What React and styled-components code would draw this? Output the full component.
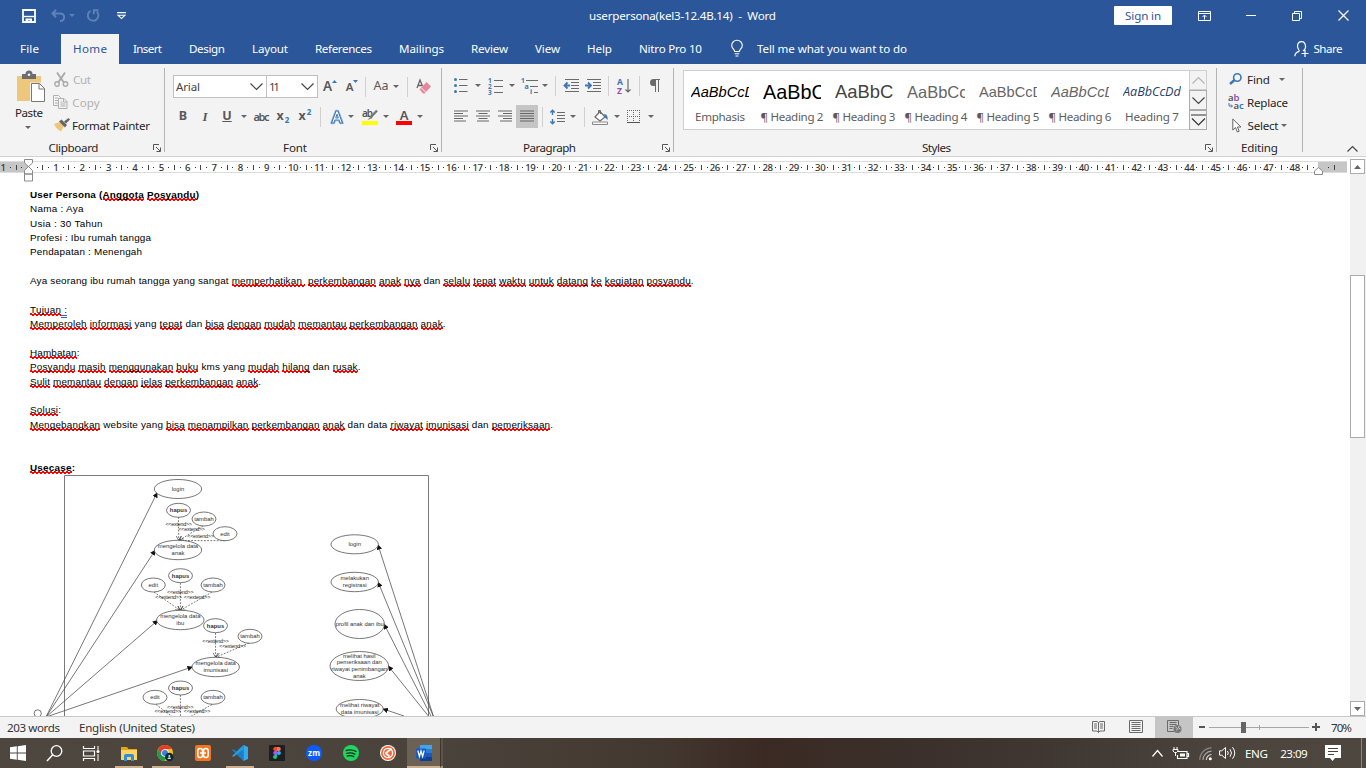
import React, { useLayoutEffect, useRef, useState } from "react";
import styled, { createGlobalStyle, css } from "styled-components";

const UI = `"Noto Sans", "Open Sans", sans-serif`;
const ARIAL = `"Liberation Sans", Arial, sans-serif`;
const BLUE = "#2b579a";

const Global = createGlobalStyle`
  * { box-sizing: border-box; }
  html, body { margin: 0; padding: 0; overflow: hidden; background: #fff; }
  body { font-family: ${UI}; font-size: 11.6px; color: #262626; }
  svg { display: block; flex: none; overflow: visible; }
`;

/* ---------- text fitted to a given advance width ---------- */
const FitBox = styled.span`
  display: inline-block;
  flex: none;
  white-space: pre;
  width: ${(p) => p.$w}px;
`;

function Fit({ w, children, className }) {
  const ref = useRef(null);
  const [ls, setLs] = useState(0);
  useLayoutEffect(() => {
    const el = ref.current;
    const n = el.textContent.length;
    const natural = el.getBoundingClientRect().width;
    if (n > 1) setLs((w - natural) / (n - 1));
  }, [w]);
  return (
    <FitBox $w={w} className={className}>
      <span ref={ref} style={{ letterSpacing: ls }}>{children}</span>
    </FitBox>
  );
}

/* ---------- frame ---------- */
const Window = styled.div`
  width: 1366px;
  height: 768px;
  display: flex;
  flex-direction: column;
  overflow: hidden;
  background: #fff;
`;

const Slot = styled.div`
  flex: none;
  display: flex;
  align-items: center;
  justify-content: ${(p) => p.$align || "center"};
  width: ${(p) => p.$w}px;
  margin-left: ${(p) => p.$ml || 0}px;
`;

/* ---------- title bar ---------- */
const TitleBar = styled.header`
  height: 32px;
  flex: none;
  display: flex;
  align-items: center;
  padding-bottom: 1px;
  background: ${BLUE};
  color: #fff;
`;
const SignIn = styled.button`
  width: 58px;
  height: 19px;
  margin: 0 0 0 338px;
  padding: 0;
  border: 0;
  border-radius: 1px;
  background: #fff;
  color: ${BLUE};
  font: 11.6px/18px ${UI};
`;

/* ---------- tabs ---------- */
const TabBar = styled.nav`
  height: 32px;
  flex: none;
  display: flex;
  align-items: flex-end;
  background: ${BLUE};
  color: #fff;
`;
const Tab = styled.div`
  flex: none;
  height: 30px;
  display: flex;
  align-items: center;
  padding: 0 0 1px ${(p) => p.$pl}px;
  width: ${(p) => p.$w}px;
  ${(p) => p.$active && css`background: #f3f3f3; color: ${BLUE};`}
`;

/* ---------- ribbon ---------- */
const Ribbon = styled.section`
  height: 93px;
  flex: none;
  display: flex;
  background: #f3f3f3;
  border-bottom: 1px solid #d2d2d2;
`;
const Group = styled.div`
  flex: none;
  width: ${(p) => p.$w}px;
  height: 84px;
  margin-top: 4px;
  border-right: 1px solid #b4b4b4;
  display: flex;
  flex-direction: column;
`;
const GroupBody = styled.div`
  height: 72px;
  flex: none;
  display: flex;
  flex-direction: ${(p) => (p.$row ? "row" : "column")};
`;
const GroupFoot = styled.div`
  height: 16px;
  flex: none;
  display: flex;
  align-items: center;
  padding-bottom: 1px;
  padding-left: ${(p) => p.$pl}px;
`;
const Launcher = styled.span`
  margin-left: auto;
  padding: 1px 3px 0 0;
`;
const ToolRow = styled.div`
  flex: none;
  display: flex;
  align-items: center;
  height: ${(p) => p.$h}px;
  margin-top: ${(p) => p.$mt || 0}px;
`;
const Sep = styled.i`
  flex: none;
  width: 1px;
  height: 20px;
  background: #d0d0d0;
  margin-left: ${(p) => p.$ml || 0}px;
`;
const PasteColumn = styled.div`
  width: 52px;
  padding: 3px 0 0 15px;
  flex: none;
`;
const PasteCaption = styled.div`
  height: 21px;
  line-height: 16px;
  margin-top: 2px;
`;
const ClipColumn = styled.div`
  flex: none;
  display: flex;
  flex-direction: column;
`;
const ClipItem = styled.div`
  height: 23px;
  display: flex;
  align-items: center;
  padding-bottom: 1px;
  color: ${(p) => (p.$off ? "#b1b1b1" : "#262626")};
`;
const Combo = styled.div`
  flex: none;
  width: ${(p) => p.$w}px;
  height: 23px;
  border: 1px solid #c0c0c0;
  background: #fff;
  display: flex;
  align-items: center;
  justify-content: space-between;
  padding: 0 3px 0 2px;
  color: #444;
  & + & { margin-left: -1px; }
`;
const Glyph = styled.span`
  color: ${(p) => p.$c || "#595959"};
  font-family: ${(p) => p.$f || UI};
  font-size: ${(p) => p.$s || 12}px;
  font-weight: ${(p) => p.$b || 400};
  font-style: ${(p) => (p.$i ? "italic" : "normal")};
  text-decoration: ${(p) => p.$d || "none"};
  line-height: 1;
  white-space: nowrap;
`;
const Script = styled.span`
  font-size: 8px;
  color: #3b78b5;
  position: relative;
  top: ${(p) => p.$top}px;
  margin-left: 1px;
`;
const Pressed = styled.div`
  flex: none;
  width: 22px;
  height: 23px;
  background: #c5c5c5;
  margin-left: 4px;
  display: flex;
  align-items: center;
  justify-content: center;
`;

/* ---------- style gallery ---------- */
const Gallery = styled.div`
  width: 524px;
  height: 60px;
  margin: 2px 0 0 9px;
  border: 1px solid #cfcfcf;
  background: #fff;
  display: flex;
`;
const StyleItem = styled.div`
  width: 72px;
  flex: none;
  display: flex;
  flex-direction: column;
  align-items: center;
`;
const Preview = styled.div`
  width: 58px;
  height: 34px;
  margin-top: 4px;
  overflow: hidden;
  white-space: nowrap;
  line-height: 34px;
  font-family: ${(p) => p.$f || ARIAL};
  font-size: ${(p) => p.$s}px;
  font-style: ${(p) => (p.$i ? "italic" : "normal")};
  color: ${(p) => p.$c};
`;
const StyleName = styled.div`
  height: 16px;
  line-height: 15px;
  color: #5c5c5c;
`;
const GalleryScroll = styled.div`
  margin: -1px -1px -1px auto;
  width: 18px;
  display: flex;
  flex-direction: column;
`;
const ScrollKey = styled.div`
  flex: 1;
  border: 1px solid ${(p) => (p.$off ? "#d0d0d0" : "#ababab")};
  background: #f3f3f3;
  display: flex;
  align-items: center;
  justify-content: center;
`;

/* ---------- ruler ---------- */
const RulerBar = styled.div`
  height: 17px;
  flex: none;
  display: flex;
  padding-top: 4px;
  position: relative;
`;
const RulerTrack = styled.div`
  width: 1347px;
  height: 12px;
  display: flex;
  overflow: hidden;
  border-top: 1px solid #dcdcdc;
  border-bottom: 1px solid #dcdcdc;
  background: linear-gradient(90deg, #c6c6c6 0 29px, #fff 29px 1318px, #c6c6c6 1318px);
  > :first-child { margin-left: -10.6px; }
`;
const RulerCell = styled.div`
  flex: none;
  width: 26.37px;
  height: 11px;
  display: flex;
  align-items: center;
  justify-content: space-between;
  font-size: 9.6px;
  font-weight: 500;
  line-height: 11px;
  color: #333;
`;
const Tick = styled.i`
  width: 1px;
  height: 5px;
  background: #444;
`;
const Dot = styled.i`
  width: 1px;
  height: 1px;
  background: #333;
`;
const Num = styled.span`
  width: 11px;
  margin: 0 -3px;
  text-align: center;
  white-space: nowrap;
  letter-spacing: -0.4px;
`;
const Marker = styled.div`
  position: absolute;
  left: ${(p) => p.$x}px;
  top: ${(p) => p.$y}px;
  z-index: 2;
`;

/* ---------- document ---------- */
const Workspace = styled.main`
  height: 542px;
  flex: none;
  display: flex;
`;
const Page = styled.article`
  flex: 1;
  padding: 14px 0 0 30px;
  overflow: hidden;
  background: #fff;
  font-family: ${ARIAL};
  font-size: 9.9px;
  color: #000;
`;
const Line = styled.div`
  height: 14.36px;
  line-height: 14.36px;
  white-space: pre;
  font-weight: ${(p) => (p.$b ? 700 : 400)};
`;
const Misspelt = styled.span`
  background:
    linear-gradient(45deg, transparent 36%, #f00 36% 64%, transparent 64%) 0 100% / 4px 3px repeat-x,
    linear-gradient(-45deg, transparent 36%, #f00 36% 64%, transparent 64%) 2px 100% / 4px 3px repeat-x;
  padding-bottom: 1px;
`;
const Grammar = styled.span`
  border-bottom: 3px double #2a62d8;
`;
const Diagram = styled.svg`
  margin: -1px 0 0 -2px;
  display: block;
`;
const ScrollBar = styled.aside`
  width: 16px;
  margin-top: -15px;
  z-index: 1;
  display: flex;
  flex-direction: column;
  background: #f1f1f1;
`;
const ScrollArrow = styled.div`
  width: 15px;
  height: 15px;
  flex: none;
  border: 1px solid #ababab;
  background: #fff;
  display: flex;
  align-items: center;
  justify-content: center;
`;
const Thumb = styled.div`
  width: 15px;
  height: 163px;
  margin: 101px 0 auto;
  border: 1px solid #ababab;
  background: #fff;
`;

/* ---------- status bar ---------- */
const StatusBar = styled.footer`
  height: 22px;
  flex: none;
  display: flex;
  align-items: center;
  background: #f3f3f3;
  border-top: 1px solid #c8c8c8;
  color: #333;
`;
const StatusText = styled.div`
  flex: none;
  margin-left: ${(p) => p.$ml}px;
  padding-bottom: 1px;
`;
const ViewButton = styled.div`
  width: 38px;
  height: 21px;
  flex: none;
  display: flex;
  align-items: center;
  justify-content: center;
  padding-bottom: 2px;
  background: ${(p) => (p.$on ? "#c5c5c5" : "transparent")};
`;

/* ---------- task bar ---------- */
const TaskBar = styled.div`
  height: 30px;
  flex: none;
  display: flex;
  background: linear-gradient(90deg, #4e473f 0, #4a433c 32%, #43382f 48%, #3a2a23 56%, #3b302c 68%, #423a35 80%, #4c453e 90%, #4e4740 100%);
  color: #fff;
`;
const AppSlot = styled.div`
  flex: none;
  width: ${(p) => p.$w || 37}px;
  height: 30px;
  display: flex;
  align-items: center;
  justify-content: center;
`;
const RunningApp = styled.div`
  height: 30px;
  width: ${(p) => (p.$on ? 33 : 28)}px;
  display: flex;
  align-items: center;
  justify-content: center;
  padding-top: 2px;
  border-bottom: 2px solid #cbb091;
  background: ${(p) => (p.$on ? "#6b6154" : "transparent")};
`;
const Stacked = styled.div`
  width: 3px;
  height: 30px;
  border-left: 1px solid #3c362f;
  border-bottom: 2px solid #a8937a;
  background: #5d5449;
`;
const Tray = styled.div`
  margin-left: auto;
  display: flex;
  align-items: center;
`;
const DesktopEdge = styled.i`
  width: 1px;
  height: 30px;
  background: #8b857e;
  margin: 0 4px 0 20px;
`;

/* ---------- small drawings ---------- */
const G = "#6a6a6a";
const B = "#3b78b5";

const Caret = ({ c = "#666" }) => (
  <svg width="6" height="3"><path d="M0 0h6L3 3z" fill={c} /></svg>
);
const Svg = ({ w, h, children, ...r }) => (
  <svg width={w} height={h} viewBox={`0 0 ${w} ${h}`} fill="none" {...r}>{children}</svg>
);
const Chevron = ({ w = 13, h = 7, c = "#444", up }) => (
  <Svg w={w} h={h}>
    <path d={up ? `M.5 ${h - 0.5}L${w / 2} .5L${w - 0.5} ${h - 0.5}` : `M.5 .5L${w / 2} ${h - 0.5}L${w - 0.5} .5`} stroke={c} strokeWidth="1.2" />
  </Svg>
);
const LauncherIcon = () => (
  <Svg w={8} h={8}><path d="M.5 6V.5H6M3 3l4 4M7.5 3.5v4h-4" stroke="#555" /></Svg>
);
const AlignIcon = ({ xs }) => (
  <Svg w={14} h={13}>
    {xs.map(([a, b], i) => <path key={i} d={`M${a} ${i * 2 + i * 0.5 + 1}H${b}`} stroke="#666" />)}
  </Svg>
);

const RIBBON_TABS = [
  ["File", 61, 20, 19], ["Home", 58, 12, 34, true], ["Insert", 56, 14, 29], ["Design", 63, 14, 36],
  ["Layout", 63, 14, 36], ["References", 84, 14, 57], ["Mailings", 72, 14, 45], ["Review", 64, 14, 37],
  ["View", 52, 14, 25], ["Help", 52, 14, 25], ["Nitro Pro 10", 106, 14, 63],
];

const STYLES = [
  ["Emphasis", 50, { $s: 14.6, $i: true, $c: "#000" }],
  ["¶ Heading 2", 63, { $s: 19.8, $c: "#000" }],
  ["¶ Heading 3", 63, { $s: 18.4, $c: "#434343" }],
  ["¶ Heading 4", 63, { $s: 16.5, $c: "#666" }],
  ["¶ Heading 5", 63, { $s: 14.6, $c: "#666" }],
  ["¶ Heading 6", 63, { $s: 14.6, $i: true, $c: "#666" }],
  ["Heading 7", 54, { $s: 12.6, $i: true, $c: "#1f4068", $f: `"Open Sans", sans-serif` }],
];

const LINES = [
  ["User Persona (*Anggota* *Posyandu*)", 169, true],
  ["Nama : Aya", 53.5],
  ["Usia : 30 Tahun", 72.5],
  ["Profesi : Ibu rumah tangga", 121],
  ["Pendapatan : Menengah", 112],
  null,
  ["Aya seorang ibu rumah tangga yang sangat *memperhatikan * *perkembangan* *anak* *nya* dan *selalu* *tepat* *waktu* *untuk* *datang* *ke* *kegiatan* *posyandu*.", 663.5],
  null,
  ["*Tujuan*_ :_", 37],
  ["*Memperoleh* *informasi* yang *tepat* dan *bisa* *dengan* *mudah* *memantau* *perkembangan* *anak*.", 415.5],
  null,
  ["*Hambatan*:", 49.5],
  ["*Posyandu* *masih* *menggunakan* *buku* kms yang *mudah* *hilang* dan *rusak*.", 330.5],
  ["*Sulit* *memantau* *dengan* *jelas* *perkembangan* *anak*.", 231],
  null,
  ["*Solusi*:", 31],
  ["*Mengebangkan* website yang *bisa* *menampilkan* *perkembangan* *anak* dan data *riwayat* *imunisasi* dan *pemeriksaan*.", 523],
  null,
  null,
  ["*Usecase*:", 45, true],
];

function rich(text) {
  return text.split(/(\*[^*]+\*|_[^_]+_)/).filter(Boolean).map((part, i) => {
    if (part[0] === "*") return <Misspelt key={i}>{part.slice(1, -1)}</Misspelt>;
    if (part[0] === "_") return <Grammar key={i}>{part.slice(1, -1)}</Grammar>;
    return part;
  });
}

const NODES = [
  [178, 489, 23.7, 9.5, ["login"]],
  [178.5, 510.3, 12, 7, ["hapus"], true],
  [204, 519, 12, 7, ["tambah"]],
  [225, 533.7, 12, 7, ["edit"]],
  [178, 550, 23.7, 9.7, ["mengelola data", "anak"]],
  [180.5, 575.7, 12, 7, ["hapus"], true],
  [153.3, 585, 12, 7, ["edit"]],
  [213, 585, 12, 7, ["tambah"]],
  [180.3, 620, 23.7, 9.7, ["mengelola data", "ibu"]],
  [215.5, 625.7, 12, 7, ["hapus"], true],
  [250, 636.3, 12, 7, ["tambah"]],
  [215.7, 667, 23.7, 9.7, ["mengelola data", "imunisasi"]],
  [180.5, 688, 12, 7, ["hapus"], true],
  [155, 697.3, 12, 7, ["edit"]],
  [213, 697.3, 12, 7, ["tambah"]],
  [354.7, 544.3, 23.7, 9.5, ["login"]],
  [354.7, 582, 23.7, 9.7, ["melakukan", "registrasi"]],
  [359.7, 624, 24.7, 14.5, ["profil anak dan ibu"]],
  [359.3, 666, 29.3, 14.5, ["melihat hasil", "pemeriksaan dan", "riwayat penimbangan", "anak"]],
  [359.7, 709, 23.5, 9.5, ["melihat riwayat", "data imunisasi"]],
];
const ARROWS = [
  [46, 717, 157, 493], [46, 717, 155, 550.5], [46, 717, 157.5, 620.5], [46, 717, 192, 667],
  [434, 718, 378, 545], [434, 718, 378.3, 582.5], [432, 718, 384.3, 624.5], [430, 718, 388.5, 666.3], [404, 716, 383.3, 709],
];
const DASHES = [
  [178.5, 517, 178.7, 540], [203, 526, 179.5, 540], [225, 540.7, 179.5, 540.5],
  [180.4, 583, 180.4, 610], [154, 592, 179.5, 610], [212, 592, 181, 610],
  [215.5, 633, 215.6, 657], [249, 643, 216.5, 657],
  [180.4, 695, 180.4, 722], [156, 704.5, 179.5, 722], [212, 704.5, 181, 722],
];
const EXTENDS = [
  [178.7, 524.8], [191.7, 529.3], [200.5, 536.7], [180.3, 592.8], [168.5, 597.8], [197, 597.5],
  [215.5, 641.3], [232.5, 646.3], [180.3, 707.3], [167.7, 711.8], [197, 711.8],
];

function UseCases() {
  return (
    <Diagram width="412" height="244" viewBox="28 474 412 244" fill="none" stroke="#4a4a4a" strokeWidth="0.75">
      <defs>
        <marker id="head" viewBox="0 0 6 6" refX="5" refY="3" markerWidth="5.5" markerHeight="5.5" orient="auto" markerUnits="userSpaceOnUse">
          <path d="M0 0L6 3L0 6z" fill="#111" stroke="none" />
        </marker>
        <marker id="open" viewBox="0 0 6 6" refX="5" refY="3" markerWidth="5" markerHeight="5" orient="auto" markerUnits="userSpaceOnUse">
          <path d="M0 0L5.5 3L0 6" stroke="#333" />
        </marker>
      </defs>
      <path d="M64.5 720V475.5H428.5V720" stroke="#7a7a7a" strokeWidth="1" />
      {ARROWS.map(([a, b, c, d], i) => <line key={i} x1={a} y1={b} x2={c} y2={d} markerEnd="url(#head)" />)}
      {DASHES.map(([a, b, c, d], i) => <line key={i} x1={a} y1={b} x2={c} y2={d} strokeDasharray="1.8 1.4" markerEnd="url(#open)" />)}
      {NODES.map(([x, y, rx, ry], i) => <ellipse key={i} cx={x} cy={y} rx={rx} ry={ry} fill="#fff" />)}
      <g fill="#333" stroke="none" fontFamily="Liberation Sans, Arial, sans-serif" textAnchor="middle">
        {NODES.map(([x, y, , , lines, bold], i) =>
          lines.map((t, j) => (
            <text key={`${i}-${j}`} x={x} y={y + 1.8 + (j - (lines.length - 1) / 2) * 6.8} fontSize="5.9" fontWeight={bold ? 700 : 400}>{t}</text>
          ))
        )}
        {EXTENDS.map(([x, y], i) => (
          <text key={i} x={x} y={y + 1.5} fontSize="5.3" textLength="26.500" fill="#222">{"<<extend>>"}</text>
        ))}
      </g>
      <circle cx="37.7" cy="713.4" r="3.6" />
    </Diagram>
  );
}

function Title() {
  return (
    <TitleBar>
      <Slot $w={14} $ml={22}>
        <Svg w={14} h={14}>
          <path d="M1 1h12v12H1z" stroke="#fff" strokeWidth="1.8" /><path d="M2 7.5h10" stroke="#fff" strokeWidth="1.4" />
          <path d="M3.5 9.5h6.5V14h-2v-2.5H6V14H3.5z" fill="#fff" />
        </Svg>
      </Slot>
      <Slot $w={15} $ml={15}>
        <Svg w={15} h={13}><path d="M5 .8L1.5 4.5L5 8.2M1.8 4.5H9c5.5 0 5.5 7.5 0 7.5" stroke="#5f82b6" strokeWidth="2" /></Svg>
      </Slot>
      <Slot $w={6} $ml={3}><Caret c="#5f82b6" /></Slot>
      <Slot $w={14} $ml={11}>
        <Svg w={14} h={13}><path d="M4.500 1.800A5.300 5.300 0 1 0 10.800 2.600M7.800 5.200V1.200H12.500" stroke="#5f82b6" strokeWidth="1.900" /></Svg>
      </Slot>
      <Slot $w={9} $ml={17}>
        <Svg w={9} h={8}><path d="M0 .6h9M1 3.200h7L4.500 6.600z" stroke="#fff" strokeWidth="1.100" /></Svg>
      </Slot>
      <Slot $w={187} $ml={463}><Fit w={187}>userpersona(kel3-12.4B.14)  -  Word</Fit></Slot>
      <SignIn><Fit w={36}>Sign in</Fit></SignIn>
      <Slot $w={13} $ml={26}>
        <Svg w={13} h={10}><path d="M.5 .5h12v9H.5zM.5 2.500h12M6.500 8.500v-4M4.500 6l2-2 2 2" stroke="#fff" /></Svg>
      </Slot>
      <Slot $w={10} $ml={35}><Svg w={10} h={1}><path d="M0 .5h10" stroke="#fff" /></Svg></Slot>
      <Slot $w={10} $ml={36}><Svg w={10} h={10}><path d="M.5 2.500h7v7h-7zM2.500 2.500v-2h7v7h-2" stroke="#fff" /></Svg></Slot>
      <Slot $w={11} $ml={36}><Svg w={11} h={11}><path d="M.5 .5l10 10M10.500 .5l-10 10" stroke="#fff" strokeWidth="1.200" /></Svg></Slot>
    </TitleBar>
  );
}

function Tabs() {
  return (
    <TabBar>
      {RIBBON_TABS.map(([t, w, pl, tw, on]) => (
        <Tab key={t} $w={w} $pl={pl} $active={on}><Fit w={tw}>{t}</Fit></Tab>
      ))}
      <Tab $w={26} $pl={0}>
        <Svg w={12} h={17}>
          <path d="M3.700 11.500c0-2-3-3-3-6a5.300 5.300 0 0 1 10.600 0c0 3-3 4-3 6zM3.700 13.800h4.600M4.500 16h3" stroke="#fff" strokeWidth="1.100" />
        </Svg>
      </Tab>
      <Tab $w={537} $pl={0}><Fit w={150}>Tell me what you want to do</Fit></Tab>
      <Tab $w={72} $pl={0}>
        <Svg w={15} h={16}>
          <path d="M3.500 5.500a4 4.800 0 1 1 5.500 4.400M3.500 5.500C3.800 8.500 6 9.500 5 10.300C2.500 11 1 12.500 .8 15.200M11 9v7M7.500 12.500h7" stroke="#fff" strokeWidth="1.200" />
        </Svg>
        <Slot $w={30} $ml={4}><Fit w={29}>Share</Fit></Slot>
      </Tab>
    </TabBar>
  );
}

const Foot = ({ pl, w, children, launcher = true }) => (
  <GroupFoot $pl={pl}>
    <Fit w={w}>{children}</Fit>
    {launcher && <Launcher><LauncherIcon /></Launcher>}
  </GroupFoot>
);

function ClipboardGroup() {
  return (
    <Group $w={165}>
      <GroupBody $row>
        <PasteColumn>
          <Svg w={30} h={32}>
            <path d="M2 5h24v25H2z" fill="#edc77c" /><path d="M7 3h3.500a3.500 3.500 0 0 1 7 0H21v5H7z" fill="#6d6d6d" /><circle cx="14" cy="3.800" r="1.300" fill="#f3f3f3" />
            <path d="M15 11.500h10.500l5.500 5.500v14.500h-16z" fill="#f3f3f3" />
            <path d="M16.500 12.500h8l5 5v13h-13z" fill="#fff" stroke="#777" /><path d="M24 12.500v5.500h5.500" stroke="#777" />
          </Svg>
          <PasteCaption><Fit w={28}>Paste</Fit></PasteCaption>
          <Slot $w={6} $ml={10}><Caret /></Slot>
        </PasteColumn>
        <ClipColumn>
          <ClipItem $off>
            <Slot $w={15} $ml={2}>
              <Svg w={15} h={15}><path d="M3 .5l6.500 9.500M11 .5L4.500 10" stroke="#aaa" strokeWidth="1.900" /><circle cx="3" cy="12" r="2.200" stroke="#aaa" strokeWidth="1.400" /><circle cx="11.500" cy="12" r="2.200" stroke="#aaa" strokeWidth="1.400" /></Svg>
            </Slot>
            <Slot $w={18} $ml={4}><Fit w={18}>Cut</Fit></Slot>
          </ClipItem>
          <ClipItem $off>
            <Slot $w={15} $ml={1}>
              <Svg w={15} h={14}><path d="M5 10.500H.5V.5h5l2 2v1M2 3h3M2 5.500h3M2 8h3" stroke="#b0b0b0" /><path d="M5.500 3.500h5.500l3 3v7H5.500zM10.500 3.500v3.500h3.500M7.500 7h2M7.500 9h5M7.500 11h5" stroke="#b0b0b0" /></Svg>
            </Slot>
            <Slot $w={28} $ml={4}><Fit w={27.500}>Copy</Fit></Slot>
          </ClipItem>
          <ClipItem>
            <Slot $w={16} $ml={2}>
              <Svg w={16} h={14}><path d="M0 6l6-2 4 4-3 5.500C4 12 1.500 9.500 0 6z" fill="#edc77c" /><path d="M5 3.500L7.500 1.500 13 7l-2 2.500z" fill="#666" /><path d="M10 3.500L14.500 0 16 1.500 12 5.500z" fill="#666" /></Svg>
            </Slot>
            <Slot $w={78} $ml={2}><Fit w={78}>Format Painter</Fit></Slot>
          </ClipItem>
        </ClipColumn>
      </GroupBody>
      <Foot pl={48.500} w={50}>Clipboard</Foot>
    </Group>
  );
}

function FontGroup() {
  return (
    <Group $w={277}>
      <GroupBody>
        <ToolRow $h={23} $mt={7}>
          <Slot $w={8} />
          <Combo $w={94}><Fit w={24}>Arial</Fit><Chevron /></Combo>
          <Combo $w={52}><Fit w={11}>11</Fit><Chevron /></Combo>
          <Slot $w={14} $ml={5}>
            <Glyph $s={13.500} $b={600}>A</Glyph>
            <Svg w={5} h={14}><path d="M0 3L2.500 0L5 3z" fill={B} /></Svg>
          </Slot>
          <Slot $w={14} $ml={8}>
            <Glyph $s={11.500} $b={600}>A</Glyph>
            <Svg w={5} h={14}><path d="M0 0L2.500 3L5 0z" fill={B} /></Svg>
          </Slot>
          <Sep $ml={6} />
          <Slot $w={16} $ml={7}><Glyph $s={12.500}><Fit w={15}>Aa</Fit></Glyph></Slot>
          <Slot $w={6} $ml={4}><Caret /></Slot>
          <Sep $ml={8} />
          <Slot $w={16} $ml={8}>
            <Svg w={16} h={15}>
              <path d="M1 9L4 1l2.500 6M2 6.500h4" stroke="#666" strokeWidth="1.300" />
              <path d="M3.500 10.500L10.500 3 15 7.500l-6.500 7h-1.500z" fill="#e8879a" /><path d="M5 8.500l5 5" stroke="#f3f3f3" />
            </Svg>
          </Slot>
        </ToolRow>
        <ToolRow $h={23} $mt={7}>
          <Slot $w={12} $ml={12}><Glyph $s={12.500} $b={700}>B</Glyph></Slot>
          <Slot $w={12} $ml={10}><Glyph $s={13} $b={600} $i $f="'Liberation Serif', serif">I</Glyph></Slot>
          <Slot $w={12} $ml={10}><Glyph $s={12.500} $b={700} $d="underline">U</Glyph></Slot>
          <Slot $w={6} $ml={8}><Caret /></Slot>
          <Slot $w={17} $ml={6}><Glyph $s={11} $b={600} $d="line-through"><Fit w={16}>abc</Fit></Glyph></Slot>
          <Slot $w={14} $ml={6}><Glyph $s={12.500} $b={700}>x<Script $top={3}>2</Script></Glyph></Slot>
          <Slot $w={14} $ml={8}><Glyph $s={12.500} $b={700}>x<Script $top={-5}>2</Script></Glyph></Slot>
          <Sep $ml={8} />
          <Slot $w={14} $ml={9}>
            <Svg w={14} h={14}><path d="M1.500 13L6 1h2l4.500 12h-2.300L9 10H5L3.800 13z" stroke="#a9c6e4" strokeWidth="2.600" strokeLinejoin="round" /><path d="M1.500 13L6 1h2l4.500 12h-2.300L9 10H5L3.800 13z" stroke="#3b78b5" strokeWidth="1.100" fill="#fff" /><path d="M5.700 8L7 4.200 8.300 8z" stroke="#3b78b5" /></Svg>
          </Slot>
          <Slot $w={6} $ml={4}><Caret /></Slot>
          <Slot $w={16} $ml={8}>
            <Svg w={16} h={16}>
              <text x="0" y="8" fontSize="10" fontWeight="600" fill="#555" fontFamily="Noto Sans, sans-serif" textLength="11">ab</text>
              <path d="M15 1.500L8.500 8.500" stroke="#777" strokeWidth="2.400" /><path d="M9 7l1.500 2L5.500 11z" fill="#777" />
              <path d="M0 12h16v4H0z" fill="#ff0" />
            </Svg>
          </Slot>
          <Slot $w={6} $ml={5}><Caret /></Slot>
          <Slot $w={16} $ml={7}>
            <Svg w={16} h={16}>
              <text x="8" y="11" fontSize="13" fontWeight="600" fill="#555" fontFamily="Noto Sans, sans-serif" textAnchor="middle">A</text>
              <path d="M0 12h16v4H0z" fill="#f00" />
            </Svg>
          </Slot>
          <Slot $w={6} $ml={5}><Caret /></Slot>
        </ToolRow>
      </GroupBody>
      <Foot pl={118} w={24}>Font</Foot>
    </Group>
  );
}

function ParagraphGroup() {
  return (
    <Group $w={232}>
      <GroupBody>
        <ToolRow $h={23} $mt={6}>
          <Slot $w={14} $ml={12}>
            <Svg w={14} h={15}>{[1.500, 7.500, 13.500].map((y) => <g key={y}><circle cx="1.500" cy={y} r="1.500" fill={B} /><path d={`M5 ${y}h8.500`} stroke={G} /></g>)}</Svg>
          </Slot>
          <Slot $w={6} $ml={7}><Caret /></Slot>
          <Slot $w={15} $ml={7}>
            <Svg w={15} h={16}>{[1, 2, 3].map((n) => <g key={n}><text x="0" y={n * 6 - 1} fontSize="6.500" fontWeight="700" fill={B}>{n}</text><path d={`M6 ${n * 6 - 3.500}h9`} stroke={G} /></g>)}</Svg>
          </Slot>
          <Slot $w={6} $ml={6}><Caret /></Slot>
          <Slot $w={17} $ml={6}>
            <Svg w={17} h={16}>
              <text x="0" y="5" fontSize="6.500" fontWeight="700" fill={B}>1</text><text x="3.500" y="11" fontSize="7" fontWeight="700" fill={B}>a</text><text x="9" y="16" fontSize="7" fontWeight="700" fill={B}>i</text>
              <path d="M5 2.500h12M9 8.500h8M13 14.500h4" stroke={G} />
            </Svg>
          </Slot>
          <Slot $w={6} $ml={4}><Caret /></Slot>
          <Sep $ml={7} />
          <Slot $w={16} $ml={7}>
            <Svg w={16} h={13}><path d="M2 .5h14M8 3.500h8M8 6.500h8M8 9.500h8M2 12.500h14" stroke={G} /><path d="M7 6.500H2M4.500 3.500l-3 3 3 3" stroke={B} strokeWidth="1.800" /></Svg>
          </Slot>
          <Slot $w={16} $ml={6}>
            <Svg w={16} h={13}><path d="M2 .5h14M8 3.500h8M8 6.500h8M8 9.500h8M2 12.500h14" stroke={G} /><path d="M0 6.500h5M3 3.500l3 3-3 3" stroke={B} strokeWidth="1.800" /></Svg>
          </Slot>
          <Sep $ml={7} />
          <Slot $w={14} $ml={8}>
            <Svg w={14} h={16}>
              <text x="0" y="7" fontSize="8.500" fontWeight="700" fill={B}>A</text><text x="0" y="15.500" fontSize="8.500" fontWeight="700" fill="#8a50b0">Z</text>
              <path d="M11 1v13M8.500 11.500L11 14l2.500-2.500" stroke={G} strokeWidth="1.200" />
            </Svg>
          </Slot>
          <Sep $ml={8} />
          <Slot $w={10} $ml={10}>
            <Svg w={10} h={13}><path d="M5 7H3.500a3.500 3.500 0 0 1 0-7H10v1H9v12H8V1H6v12H5z" fill={G} /></Svg>
          </Slot>
        </ToolRow>
        <ToolRow $h={23} $mt={8}>
          <Slot $w={14} $ml={12}><AlignIcon xs={[[0, 14], [0, 9], [0, 14], [0, 9], [0, 12]]} /></Slot>
          <Slot $w={14} $ml={8}><AlignIcon xs={[[0, 14], [2.500, 11.500], [0, 14], [2.500, 11.500], [1, 13]]} /></Slot>
          <Slot $w={14} $ml={8}><AlignIcon xs={[[0, 14], [5, 14], [0, 14], [5, 14], [2, 14]]} /></Slot>
          <Pressed><AlignIcon xs={[[0, 14], [0, 14], [0, 14], [0, 14], [0, 14]]} /></Pressed>
          <Sep $ml={4} />
          <Slot $w={15} $ml={7}>
            <Svg w={15} h={16}><path d="M7 3.500h8M7 6.500h8M7 9.500h8M7 12.500h8" stroke={G} /><path d="M2.500 1v5M2.500 10v5M.3 3.500l2.200-2.300 2.200 2.300M.3 12.500l2.200 2.300 2.200-2.300" stroke={B} strokeWidth="1.400" /></Svg>
          </Slot>
          <Slot $w={6} $ml={5}><Caret /></Slot>
          <Sep $ml={8} />
          <Slot $w={16} $ml={7}>
            <Svg w={16} h={16}>
              <path d="M3 8l5-5.500L13 8l-5 4z" fill="#fff" stroke={G} strokeWidth="1.200" /><path d="M6.500 5V1.500h2V5" stroke={G} /><path d="M12 5c3 0 4 3 3.500 6L13 8.500z" fill={B} /><path d="M.5 13h15v2.500H.5z" fill="#fff" stroke="#888" />
            </Svg>
          </Slot>
          <Slot $w={6} $ml={6}><Caret /></Slot>
          <Slot $w={13} $ml={7}>
            <Svg w={13} h={14}><path d="M.5 0v12M6.500 0v12M12.500 0v12M0 .5h13M0 6.500h13" stroke={G} strokeDasharray="1 1" /><path d="M0 12.500h13" stroke="#555" /></Svg>
          </Slot>
          <Slot $w={6} $ml={8}><Caret /></Slot>
        </ToolRow>
      </GroupBody>
      <Foot pl={81} w={53}>Paragraph</Foot>
    </Group>
  );
}

function StylesGroup() {
  return (
    <Group $w={543}>
      <GroupBody>
        <Gallery>
          {STYLES.map(([name, w, look]) => (
            <StyleItem key={name}>
              <Preview {...look}>AaBbCcDd</Preview>
              <StyleName><Fit w={w}>{name}</Fit></StyleName>
            </StyleItem>
          ))}
          <GalleryScroll>
            <ScrollKey $off><Chevron c="#b5b5b5" up /></ScrollKey>
            <ScrollKey><Chevron /></ScrollKey>
            <ScrollKey><Svg w={15} h={12}><path d="M0 1h15M1 4.500l6.500 6.500L14 4.500" stroke="#333" strokeWidth="1.200" /></Svg></ScrollKey>
          </GalleryScroll>
        </Gallery>
      </GroupBody>
      <Foot pl={248} w={29}>Styles</Foot>
    </Group>
  );
}

function EditingGroup() {
  return (
    <Group $w={86}>
      <GroupBody>
        <ClipItem>
          <Slot $w={13} $ml={12}><Svg w={13} h={12}><circle cx="8.300" cy="4.500" r="3.700" stroke={B} strokeWidth="1.600" /><path d="M5.500 7L1 11" stroke={B} strokeWidth="2.400" /></Svg></Slot>
          <Slot $w={23} $ml={5}><Fit w={23}>Find</Fit></Slot>
          <Slot $w={6} $ml={9}><Caret /></Slot>
        </ClipItem>
        <ClipItem>
          <Slot $w={17} $ml={11}>
            <Svg w={17} h={16}>
              <g fontSize="9.500" fontWeight="600" fontFamily="Noto Sans, sans-serif">
                <text x="0" y="7" fill="#555">a<tspan fill="#8a50b0">b</tspan></text>
                <text x="5.500" y="15" fill="#555">a<tspan fill={B}>c</tspan></text>
              </g>
              <path d="M1 9v3h3M3 10.500L4.500 12 3 13.500" stroke={B} />
            </Svg>
          </Slot>
          <Slot $w={41} $ml={2}><Fit w={41}>Replace</Fit></Slot>
        </ClipItem>
        <ClipItem>
          <Slot $w={10} $ml={15}><Svg w={10} h={15}><path d="M.8 1v11l2.700-2.500L5.300 14l1.900-.8L5.400 9H9z" fill="#fff" stroke="#666" /></Svg></Slot>
          <Slot $w={32} $ml={5}><Fit w={31}>Select</Fit></Slot>
          <Slot $w={6} $ml={2}><Caret /></Slot>
        </ClipItem>
      </GroupBody>
      <Foot pl={24} w={37} launcher={false}>Editing</Foot>
    </Group>
  );
}

const CollapseArea = styled.div`
  flex: 1;
  display: flex;
  align-items: flex-end;
  justify-content: flex-end;
  padding: 0 8px 4px 0;
`;

function Ruler() {
  const cells = [];
  for (let n = -1; n <= 49; n++) cells.push(n);
  return (
    <RulerBar>
      <RulerTrack>
        {cells.map((n) => (
          <RulerCell key={n}><Tick /><Dot /><Num>{n === 0 || n === 49 ? "" : Math.abs(n)}</Num><Dot /><i /></RulerCell>
        ))}
        <RulerCell><Tick /><Dot /></RulerCell>
      </RulerTrack>
      <Marker $x={24} $y={2}>
        <Svg w={9} h={22}>
          <path d="M.5 .5h8v3.500L4.500 7.500l4 4v3.500h-8v-3.500l4-4L.5 4zM.5 15h8v7h-8z" fill="#fff" stroke="#8a8a8a" />
        </Svg>
      </Marker>
      <Marker $x={1314} $y={10}>
        <Svg w={9} h={8}><path d="M4.500 .5l4 3.500v3.500h-8V4z" fill="#fff" stroke="#8a8a8a" /></Svg>
      </Marker>
    </RulerBar>
  );
}

function Status() {
  return (
    <StatusBar>
      <StatusText $ml={7}><Fit w={53}>203 words</Fit></StatusText>
      <StatusText $ml={19}><Fit w={116}>English (United States)</Fit></StatusText>
      <Slot $w={884} />
      <ViewButton>
        <Svg w={13} h={12}><path d="M6.500 1.500L5 .5H.5v9.500H5l1.500 1.500L8 10h4.500V.5H8zM6.500 1.500v10M2 3h3M2 5h3M2 7h3M8 3h3M8 5h3M8 7h3" stroke={G} /></Svg>
      </ViewButton>
      <ViewButton>
        <Svg w={14} h={13}><path d="M.5 .5h13v12H.5zM2.500 2.500h9M2.500 4.500h9M2.500 6.500h9M2.500 8.500h9M2.500 10.500h9" stroke={G} /></Svg>
      </ViewButton>
      <ViewButton $on>
        <Svg w={15} h={13}><path d="M7 11.500H.5V.5h11V5M2.500 2.500h7M2.500 4.500h7M2.500 6.500h4M2.500 8.500h3" stroke={G} /><circle cx="10.500" cy="9" r="4" fill="#777" /><path d="M8.500 7l2 1.500-1 2M12 6l-.5 2 2 1" stroke="#c5c5c5" /></Svg>
      </ViewButton>
      <Slot $w={6} $ml={6}><Svg w={6} h={3}><path d="M0 1h6" stroke="#555" strokeWidth="2" /></Svg></Slot>
      <Slot $w={100} $ml={4}>
        <Svg w={100} h={14}><path d="M0 6.500h100" stroke="#a6a6a6" /><path d="M50.500 4v5" stroke="#a6a6a6" /><path d="M32 1h5v11h-5z" fill="#666" /></Svg>
      </Slot>
      <Slot $w={8} $ml={3}><Svg w={8} h={9}><path d="M0 4h8M4 0v8" stroke="#555" strokeWidth="2" /></Svg></Slot>
      <StatusText $ml={11}><Fit w={21}>70%</Fit></StatusText>
    </StatusBar>
  );
}

function Tasks() {
  return (
    <TaskBar>
      <AppSlot $w={36}><Svg w={16} h={16}><path d="M0 2.300L6.800 1.300V7.600H0zM7.700 1.200L16 0V7.600H7.700zM0 8.500h6.800v6.200L0 13.800zM7.700 8.500H16V16l-8.300-1.200z" fill="#fff" /></Svg></AppSlot>
      <AppSlot $w={36}><Svg w={17} h={17}><circle cx="10.500" cy="6" r="5.300" stroke="#fff" strokeWidth="1.300" /><path d="M6.700 9.800L1 16" stroke="#fff" strokeWidth="1.500" /></Svg></AppSlot>
      <AppSlot $w={38}>
        <Svg w={17} h={15}><path d="M.5 0v2.500h11V0M.5 15v-2.500h11V15M.5 5h11v5H.5z" stroke="#fff" strokeWidth="1.200" /><path d="M15 0v4M15 8v7" stroke="#fff" /><circle cx="15" cy="5.500" r="1.500" fill="#fff" /></Svg>
      </AppSlot>
      <AppSlot>
        <RunningApp>
          <Svg w={16} h={15}><path d="M0 1h6l1.500 2H16v11H0z" fill="#e6a519" /><path d="M0 4h16v10H0z" fill="#fbd667" /><path d="M3 15V10a2 2 0 0 1 2-2h6a2 2 0 0 1 2 2v5h-3v-4H6v4z" fill="#2f8fdc" /></Svg>
        </RunningApp>
      </AppSlot>
      <AppSlot>
        <RunningApp>
          <Svg w={17} h={17}>
            <circle cx="8" cy="8" r="8" fill="#fbc116" /><path d="M1.100 4A8 8 0 0 1 14.900 4H8L4.500 10z" fill="#e33b2e" /><path d="M1.100 4A8 8 0 0 0 7.500 16L11 10H5z" fill="#279847" />
            <circle cx="8" cy="8" r="3.800" fill="#fff" /><circle cx="8" cy="8" r="3" fill="#3a7de8" /><circle cx="12.300" cy="12" r="4.200" fill="#0e2a2b" /><circle cx="12.300" cy="11" r="1" fill="#cde" /><path d="M10.500 14a1.800 1.800 0 0 1 3.600 0z" fill="#cde" />
          </Svg>
        </RunningApp>
      </AppSlot>
      <AppSlot>
        <Svg w={16} h={16}><rect width="16" height="16" rx="2" fill="#f0771f" /><rect x="2.800" y="3.500" width="4.700" height="9" rx="2.300" stroke="#fff" strokeWidth="1.500" /><rect x="8.500" y="3.500" width="4.700" height="9" rx="2.300" stroke="#fff" strokeWidth="1.500" /><path d="M5 8h6" stroke="#fff" strokeWidth="1.500" /></Svg>
      </AppSlot>
      <AppSlot>
        <RunningApp>
          <Svg w={16} h={16}><path d="M11.500 0L4.500 6.500 1.500 4.200 0 5l11.500 11z" fill="#1b7fc4" /><path d="M11.500 0L0 11l1.500 1L11.500 4.200z" fill="#2a9ae0" /><path d="M11.500 0L16 2v12l-4.500 2z" fill="#33a9ee" /></Svg>
        </RunningApp>
      </AppSlot>
      <AppSlot>
        <Svg w={16} h={16}><rect width="16" height="16" rx="1" fill="#1e1e1e" /><path d="M8 2H6.200a2 2 0 0 0 0 4H8z" fill="#f24e1e" /><path d="M8 2h1.800a2 2 0 0 1 0 4H8z" fill="#ff7262" /><path d="M8 6H6.200a2 2 0 0 0 0 4H8z" fill="#a259ff" /><circle cx="9.900" cy="8" r="2" fill="#1abcfe" /><path d="M8 10H6.200A2 2 0 1 0 8 12z" fill="#0acf83" /></Svg>
      </AppSlot>
      <AppSlot>
        <Svg w={16} h={16}><circle cx="8" cy="8" r="8" fill="#0b5cff" /><text x="8" y="10.500" fontSize="8" fontWeight="700" fill="#fff" textAnchor="middle" textLength="12" fontFamily="Noto Sans, sans-serif">zm</text></Svg>
      </AppSlot>
      <AppSlot>
        <Svg w={16} h={16}><circle cx="8" cy="8" r="8" fill="#1ed760" /><path d="M3.300 5.500q5-1.500 9.600 .9M3.800 8.300q4.200-1.200 8 .8M4.300 11q3.500-1 6.500 .7" stroke="#142c1c" strokeWidth="1.400" strokeLinecap="round" /></Svg>
      </AppSlot>
      <AppSlot $w={38}>
        <Svg w={16} h={16}><circle cx="8" cy="8" r="8" fill="#fff" /><circle cx="8" cy="8" r="7" fill="#f0683c" /><circle cx="8" cy="8" r="4.600" stroke="#fff" strokeWidth="1.300" /><path d="M5.500 8.500L11.500 3.500M5.500 8l4 3.500" stroke="#fff" strokeWidth="1.700" /></Svg>
      </AppSlot>
      <RunningApp $on>
        <Svg w={16} h={16}><path d="M4 0h12v16H4z" fill="#2b7cd3" /><path d="M4 0h12v4H4z" fill="#41a5ee" /><path d="M4 8h12v4H4z" fill="#185abd" /><path d="M4 12h12v4H4z" fill="#103f91" /><path d="M0 3.500h10v10H0z" fill="#185abd" /><path d="M1.800 5.500l1.600 6L5 6l1.600 5.500 1.600-6" stroke="#fff" strokeWidth="1.200" /></Svg>
      </RunningApp>
      <Stacked />
      <Tray>
        <Chevron w={11} h={7} c="#fff" up />
        <Slot $w={16} $ml={10}>
          <Svg w={16} h={13}><path d="M5 4.500h9v7H4.500V8M14.500 6.500h1v3h-1" stroke="#fff" strokeWidth="1.200" /><path d="M7 6.500h5v3H7z" fill="#fff" /><path d="M1 0v2M4 0v2M0 2.500h5v1.500L3.500 5.500h-2L0 4zM2.500 5.500V9" stroke="#fff" /></Svg>
        </Slot>
        <Slot $w={13} $ml={10}>
          <Svg w={13} h={13}><path d="M.8 13A12 12 0 0 1 12.500 .8" stroke="#8d8781" strokeWidth="1.200" /><path d="M4 13a8.700 8.700 0 0 1 8.500-8.800" stroke="#aaa5a0" strokeWidth="1.200" /><path d="M7.300 13a5.500 5.500 0 0 1 5.200-5.500" stroke="#ccc" strokeWidth="1.200" /><circle cx="11.300" cy="11.700" r="1.500" fill="#fff" /></Svg>
        </Slot>
        <Slot $w={17} $ml={7}>
          <Svg w={17} h={14}><path d="M.6 4.800h2.200L6.500 1.500v11L2.800 9.200H.6z" stroke="#fff" /><path d="M8.500 5q1.500 2 0 4M11 3.200q3 3.800 0 7.600M13.500 1.200q4.500 5.800 0 11.600" stroke="#fff" /></Svg>
        </Slot>
        <Slot $w={23} $ml={9}><Fit w={23}>ENG</Fit></Slot>
        <Slot $w={28} $ml={12}><Fit w={27.500}>23:09</Fit></Slot>
        <Slot $w={16} $ml={17}>
          <Svg w={16} h={16}><path d="M0 0h16v13H10l-2.500 3L5 13H0z" fill="#fff" /><path d="M3 3.500h10M3 6.500h10M3 9.500h6" stroke="#4a443d" /></Svg>
        </Slot>
        <DesktopEdge />
      </Tray>
    </TaskBar>
  );
}

export default function App() {
  return (
    <>
      <Global />
      <Window>
        <Title />
        <Tabs />
        <Ribbon>
          <ClipboardGroup />
          <FontGroup />
          <ParagraphGroup />
          <StylesGroup />
          <EditingGroup />
          <CollapseArea><Chevron w={11} h={6} up /></CollapseArea>
        </Ribbon>
        <Ruler />
        <Workspace>
          <Page>
            {LINES.map((l, i) => (
              <Line key={i} $b={l && l[2]}>{l && <Fit w={l[1]}>{rich(l[0])}</Fit>}</Line>
            ))}
            <UseCases />
          </Page>
          <ScrollBar>
            <ScrollArrow><svg width="7" height="4"><path d="M0 4h7L3.500 0z" fill="#666" /></svg></ScrollArrow>
            <Thumb />
            <ScrollArrow><svg width="7" height="4"><path d="M0 0h7L3.500 4z" fill="#666" /></svg></ScrollArrow>
          </ScrollBar>
        </Workspace>
        <Status />
        <Tasks />
      </Window>
    </>
  );
}
